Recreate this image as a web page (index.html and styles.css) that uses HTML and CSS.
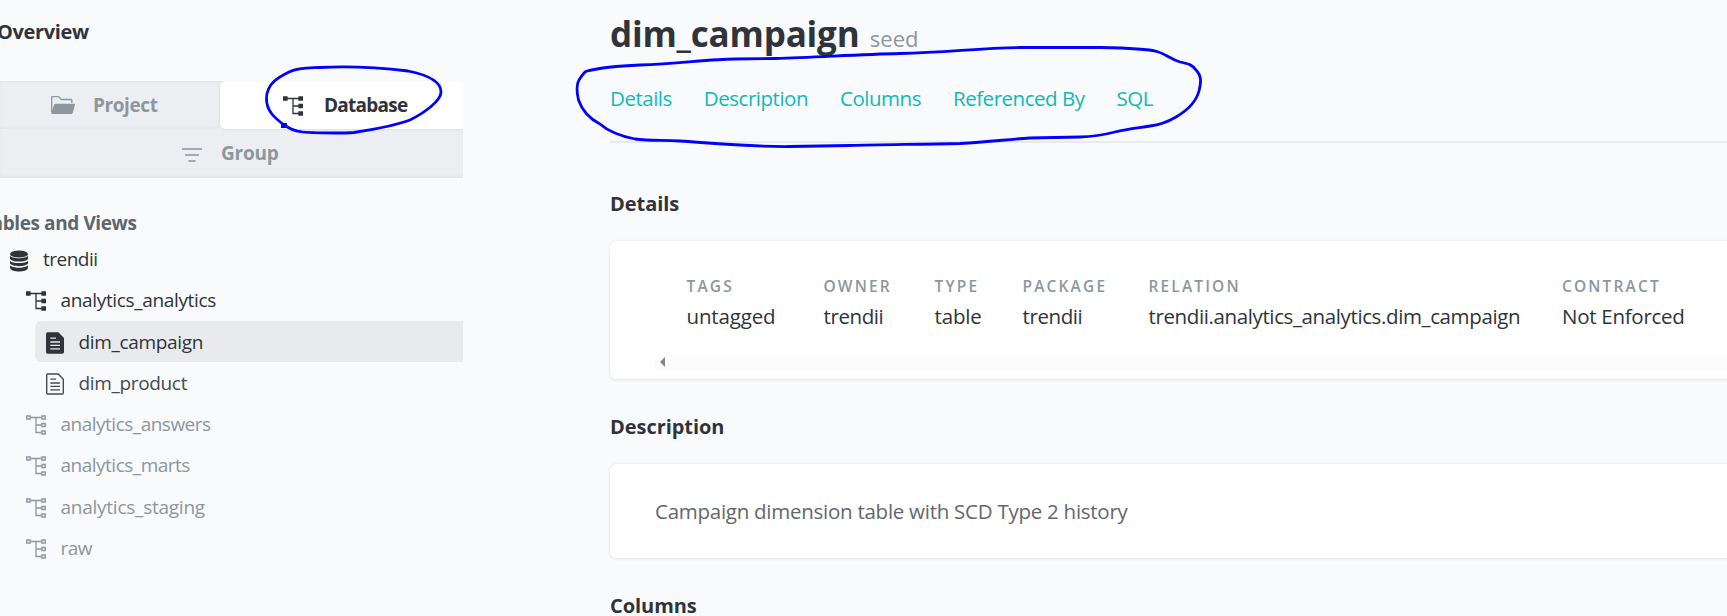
FILE: index.html
```html
<!DOCTYPE html>
<html lang="en">
<head>
<meta charset="utf-8">
<title>dim_campaign</title>
<link rel="stylesheet" href="styles.css">
</head>
<body>
<svg class="defs" width="0" height="0">
  <symbol id="tree-solid" viewBox="0 0 20 20">
    <path d="M3 2.5H18M10 2.5V17.5H18M10 10H18" fill="none" stroke="currentColor" stroke-width="1.3"/>
    <path d="M0 .3h4.6v4.4H0zM15.4.3H20v4.4h-4.6zM15.4 7.8H20v4.4h-4.6zM15.4 15.3H20v4.4h-4.6z" fill="currentColor"/>
  </symbol>
  <symbol id="tree-line" viewBox="0 0 20 20">
    <path d="M4.5 2.5H15.5M10 2.5V17.5H15.5M10 10H15.5" fill="none" stroke="currentColor" stroke-width="1.3"/>
    <path d="M.8 1h3.3v3H.8zM15.9 1h3.3v3h-3.3zM15.9 8.5h3.3v3h-3.3zM15.9 16h3.3v3h-3.3z" fill="none" stroke="currentColor" stroke-width="1.4"/>
  </symbol>
  <symbol id="database" viewBox="0 0 18 22">
    <ellipse cx="9" cy="4" rx="9" ry="3.6" fill="currentColor"/>
    <path d="M0 5.6C2 9.2 16 9.2 18 5.6V9C16 12.4 2 12.4 0 9zM0 10.4C2 14 16 14 18 10.4V13.6C16 17 2 17 0 13.6zM0 15C2 18.6 16 18.6 18 15V18C17 22.8 1 22.8 0 18z" fill="currentColor"/>
  </symbol>
  <symbol id="doc-solid" viewBox="0 0 18 22">
    <path d="M1.6.3H12.4L18 6V20q0 1.7-1.6 1.7H1.6Q0 21.7 0 20V2Q0 .3 1.6.3z" fill="currentColor"/>
    <path d="M4.3 6.1H10M4.3 10H14M4.3 13.4H14M4.3 16.8H14" stroke="#e9eaee" stroke-width="1.3"/>
  </symbol>
  <symbol id="doc-line" viewBox="0 0 18 22">
    <path d="M1.6 1H12.2L17.3 6.2V20q0 1-1 1H1.7q-1 0-1-1V2Q.7 1 1.6 1z" fill="none" stroke="currentColor" stroke-width="1.4"/>
    <path d="M4.3 6.1H10M4.3 10H14M4.3 13.4H14M4.3 16.8H14" stroke="currentColor" stroke-width="1.3"/>
  </symbol>
</svg>

<div class="layout">
  <aside class="sidebar">
    <div class="overview">Overview</div>
    <div class="switcher">
      <div class="tabs">
        <div class="tab tab-project">
          <svg class="folder-icon" viewBox="0 0 24 18"><path d="M.7 16V1.2q0-.6.7-.6H7.2q.6 0 1 .6L10.2 3.5H20q.8 0 .8.8V7" fill="none" stroke="currentColor" stroke-width="1.3"/><path d="M4.6 7.8H23q1.2 0 .9 1.1L21.8 16.8q-.3 1.1-1.4 1.1H1.2Q.1 17.9.4 16.8L3 8.8q.4-1 1.6-1z" fill="currentColor"/></svg>
          <span>Project</span>
        </div>
        <div class="tab tab-database"><svg class="tree-icon"><use href="#tree-solid"/></svg><span>Database</span></div>
      </div>
      <div class="tab tab-group">
        <svg class="filter-icon" viewBox="0 0 20 14"><path d="M0 .9H20M3 7H17M6.4 13.1H13.6" stroke="currentColor" stroke-width="1.5"/></svg>
        <span>Group</span>
      </div>
    </div>
    <div class="tree-title"><span>Tables and Views</span></div>
    <div class="tree">
      <div class="row root"><svg class="file-icon"><use href="#database"/></svg><span class="tight">trendii</span></div>
      <div class="row schema"><svg class="tree-icon"><use href="#tree-solid"/></svg><span>analytics_analytics</span></div>
      <div class="row model active"><svg class="file-icon"><use href="#doc-solid"/></svg><span>dim_campaign</span></div>
      <div class="row model open"><svg class="file-icon"><use href="#doc-line"/></svg><span>dim_product</span></div>
      <div class="row schema muted"><svg class="tree-icon"><use href="#tree-line"/></svg><span class="tight">analytics_answers</span></div>
      <div class="row schema muted"><svg class="tree-icon"><use href="#tree-line"/></svg><span class="tight">analytics_marts</span></div>
      <div class="row schema muted"><svg class="tree-icon"><use href="#tree-line"/></svg><span class="loose">analytics_staging</span></div>
      <div class="row schema muted"><svg class="tree-icon"><use href="#tree-line"/></svg><span class="tight">raw</span></div>
    </div>
  </aside>

  <main class="content">
    <header class="header">
      <h1 class="title">dim_campaign <small class="kind">seed</small></h1>
      <nav class="nav"><a>Details</a><a>Description</a><a>Columns</a><a>Referenced By</a><a>SQL</a></nav>
    </header>
    <h2 class="heading heading-first">Details</h2>
    <section class="card details">
      <dl class="facts">
        <div class="fact tags"><dt>TAGS</dt><dd>untagged</dd></div>
        <div class="fact owner"><dt>OWNER</dt><dd>trendii</dd></div>
        <div class="fact type"><dt>TYPE</dt><dd>table</dd></div>
        <div class="fact package"><dt>PACKAGE</dt><dd>trendii</dd></div>
        <div class="fact relation"><dt>RELATION</dt><dd>trendii.analytics_analytics.dim_campaign</dd></div>
        <div class="fact contract"><dt>CONTRACT</dt><dd>Not Enforced</dd></div>
      </dl>
      <div class="scrollbar"><svg class="arrow" viewBox="0 0 5 10"><path d="M5 0V10L0 5z" fill="#858585"/></svg></div>
    </section>
    <h2 class="heading">Description</h2>
    <section class="card description">Campaign dimension table with SCD Type 2 history</section>
    <h2 class="heading heading-last">Columns</h2>
  </main>
</div>

<svg class="ink" viewBox="0 0 1727 616">
  <path d="M284 125C275 118 266 111 266.500 98C267 83 279 77 289 72C300 67 309 68 320 67.500C348 66 370 66.500 408 71C428 75 441 82 441 92C441 101 424 113 410 120C397 125 376 129 354 132.500C340 133.500 303 133 297 131C291 130 288 127 284 125"/>
  <path d="M281 123h6v5h-6z" fill="#00f" stroke="none"/>
  <path d="M585 72L587 71C603 67 618 66 640 65C680 63.500 710 59 735 59L775 58.500C820 57 860 54.500 900 53.500C950 52 980 48 1020 47.500H1100C1125 48 1148 49 1157 51.500C1166 54 1170 59 1180 62C1190 64 1192 65 1196 70C1202 76 1201 83 1199 91C1196 102 1188 110 1176 117C1166 123 1158 125 1150 126C1138 128 1128 129 1115 132C1103 135 1095 136.500 1080 137L1030 138C1010 139 990 142 960 143.500C920 144.500 880 144.500 850 145.500L790 146.500C750 147 710 143 680 141C660 140 650 141 635 139C620 136 608 131 600 124C590 119 582 110 578.500 100C576.500 91 576.500 84 579 80Q582 75 585 72"/>
</svg>
</body>
</html>
```
FILE: styles.css
```css
* { box-sizing: border-box; }
body {
  margin: 0;
  height: 616px;
  overflow: hidden;
  background: #f9fafc;
  color: #303339;
  font: 400 20px/30px "Open Sans", "Noto Sans", sans-serif;
}
.defs { display: block; }
.layout { display: flex; height: 616px; overflow: hidden; }
span, a { white-space: nowrap; }

/* Sidebar */
.sidebar { width: 463px; flex: none; overflow: hidden; font-size: 19px; }
.overview {
  height: 81px;
  padding-top: 17px;
  margin-left: -3px;
  font-size: 20px;
  font-weight: 700;
  letter-spacing: -.35px;
}
.switcher {
  height: 97px;
  background: #edeef2;
  box-shadow: inset 0 2px 2px -1px #e4e5e9, inset 0 -3px 3px -1px #e3e4e8;
}
.tabs { display: flex; height: 48px; }
.tab {
  display: flex;
  align-items: center;
  color: #8c979f;
  font-weight: 700;
  letter-spacing: -.4px;
}
.tab-project {
  width: 220px;
  padding-left: 51px;
  gap: 18px;
  border-radius: 0 6px 6px 0;
  box-shadow: inset -2px -2px 2px -1px #e2e3e7;
}
.tab-database {
  flex: 1;
  padding-left: 63px;
  gap: 21px;
  background: #fff;
  color: #303339;
  letter-spacing: -.75px;
  border-radius: 6px 0 0 6px;
  box-shadow: 0 1px 2px #dfe0e4;
}
.tab-group { height: 49px; padding: 0 0 1px 182px; gap: 19px; letter-spacing: -.2px; }
.folder-icon { width: 24px; height: 18px; }
.filter-icon { width: 20px; height: 14px; margin-top: 4px; }
.tree-icon { width: 20px; height: 20px; flex: none; margin-top: 2px; }
.file-icon { width: 18px; height: 22px; flex: none; }
.tree-title {
  display: flex;
  justify-content: flex-end;
  width: 136.500px;
  height: 60.600px;
  padding-top: 30px;
  color: #5d666d;
  font-weight: 700;
  letter-spacing: -.4px;
}
.row { display: flex; align-items: center; height: 41.250px; letter-spacing: -.34px; }
.root { padding-left: 10px; gap: 15px; }
.root .file-icon { margin-top: 3px; }
.schema { padding-left: 26px; gap: 14.500px; }
.model { margin-left: 35px; padding-left: 11px; gap: 14.500px; }
.model .file-icon { margin-top: 3px; }
.active { background: #e9eaee; border-radius: 6px 0 0 6px; }
.open { color: #454b52; }
.muted { color: #8c979f; }
.tight { letter-spacing: -.5px; }
.loose { letter-spacing: -.25px; }

/* Main column */
.content { flex: 1; padding-left: 147px; min-width: 0; }
.header { height: 143px; border-bottom: 2px solid #e9eaec; }
.title {
  margin: 0;
  padding-top: 10px;
  height: 83px;
  font-size: 35px;
  line-height: 48px;
  letter-spacing: -.2px;
  white-space: nowrap;
}
.kind { font-size: 22px; font-weight: 400; color: #8c979f; letter-spacing: 0; margin-left: 1.500px; }
.nav { display: flex; gap: 32px; color: #12b8b6; font-size: 20.500px; letter-spacing: -.48px; }
.heading { margin: 0; padding: 33px 0 0; height: 85px; font-size: 20px; line-height: 30px; font-weight: 700; letter-spacing: -.05px; }
.heading-first { padding-top: 46px; height: 98px; }
.heading-last { padding-top: 33px; height: 57px; }
.card {
  margin-right: -10px;
  background: #fff;
  border-radius: 6px;
  box-shadow: 0 0 2px #dfe2e5, 0 1px 3px #e3e5e8;
}
.details { height: 138px; padding: 32px 0 0 45px; }
.facts { display: flex; height: 81.500px; margin: 0; padding-left: 31.500px; }
.fact { flex: none; }
.fact dt { font-size: 15.500px; line-height: 26px; font-weight: 600; color: #8c979f; letter-spacing: 2.150px; }
.fact dd { margin: -1px 0 0; font-size: 20.500px; line-height: 36px; white-space: nowrap; letter-spacing: -.15px; }
.tags { width: 137px; }
.owner { width: 111px; }
.type { width: 88px; }
.package { width: 126px; }
.package dd, .owner dd { letter-spacing: -.4px; }
.relation { width: 413.500px; }
.relation dd { letter-spacing: -.38px; }
.contract dd { letter-spacing: -.27px; }
.scrollbar { display: flex; align-items: center; height: 15px; padding-left: 5px; background: #fcfcfc; }
.arrow { width: 5px; height: 10px; }
.description { height: 94px; padding: 32px 45px; color: #63676d; font-size: 20.500px; letter-spacing: -.26px; }

/* Hand-drawn marks over the page */
.ink { position: absolute; inset: 0; width: 1727px; height: 616px; pointer-events: none; fill: none; stroke: #00f; stroke-width: 2.800; stroke-linejoin: round; stroke-linecap: round; }
```
